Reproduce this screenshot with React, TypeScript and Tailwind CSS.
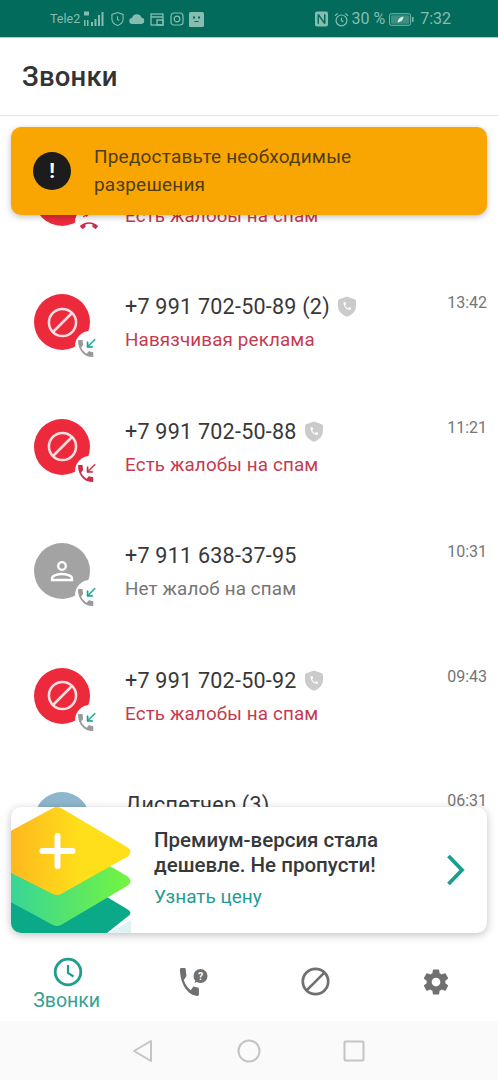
import React from 'react';

const font = "font-['Roboto','Noto_Sans',sans-serif]";

const HANDSET =
  'M6.62 10.79c1.44 2.83 3.76 5.14 6.59 6.59l2.2-2.2c.27-.27.67-.36 1.02-.24 1.12.37 2.33.57 3.57.57.55 0 1 .45 1 1V20c0 .55-.45 1-1 1-9.39 0-17-7.61-17-17 0-.55.45-1 1-1h3.5c.55 0 1 .45 1 1 0 1.25.2 2.45.57 3.57.11.35.03.74-.25 1.02l-2.2 2.2z';

const CALL_END =
  'M12 9c-1.600 0-3.150.25-4.600.72v3.100c0 .39-.23.74-.56.9-.98.49-1.870 1.120-2.660 1.850-.18.18-.43.28-.7.28-.28 0-.53-.11-.71-.29L.29 13.080c-.18-.17-.29-.42-.29-.7 0-.28.11-.53.29-.71C3.340 8.780 7.460 7 12 7s8.660 1.780 11.710 4.670c.18.18.29.43.29.71 0 .28-.11.53-.29.71l-2.480 2.480c-.18.18-.43.29-.71.29-.27 0-.52-.11-.7-.28-.79-.74-1.690-1.360-2.670-1.850-.33-.16-.56-.5-.56-.9v-3.100C15.150 9.250 13.600 9 12 9z';

type CallType = 'answered' | 'blocked' | 'missed';

interface CallRow {
  name: string;
  sub: string;
  time: string;
  kind: 'spam' | 'person' | 'dispatcher';
  shield?: boolean;
  danger?: boolean;
  call?: CallType;
}

const rows: CallRow[] = [
  { name: '+7 991 702-50-89 (2)', sub: 'Навязчивая реклама', time: '13:42', kind: 'spam', shield: true, danger: true, call: 'answered' },
  { name: '+7 991 702-50-88', sub: 'Есть жалобы на спам', time: '11:21', kind: 'spam', shield: true, danger: true, call: 'blocked' },
  { name: '+7 911 638-37-95', sub: 'Нет жалоб на спам', time: '10:31', kind: 'person', call: 'answered' },
  { name: '+7 991 702-50-92', sub: 'Есть жалобы на спам', time: '09:43', kind: 'spam', shield: true, danger: true, call: 'answered' },
];

function BanGlyph({ size, color, stroke }: { size: number; color: string; stroke: number }) {
  return (
    <svg width={size} height={size} viewBox="0 0 32 32" fill="none" stroke={color} strokeWidth={stroke}>
      <circle cx="16" cy="16" r="14" />
      <path d="M6.2 25.8 25.8 6.2" />
    </svg>
  );
}

function CallBadge({ call }: { call: CallType }) {
  const red = '#c9304a';
  return (
    <div className="absolute left-[41px] top-[37px] h-[30px] w-[30px] rounded-full bg-white">
      {call === 'missed' ? (
        <svg width="30" height="30" viewBox="0 0 30 30">
          <path d="M8.500 6l3 3 3-3M8.500 10l3-3" stroke={red} strokeWidth="1.300" fill="none" />
          <g transform="translate(5 10) scale(0.75)">
            <path d={CALL_END} fill={red} />
          </g>
        </svg>
      ) : (
        <svg width="30" height="30" viewBox="0 0 30 30">
          <g transform="translate(0.450 6.150) scale(0.85 0.95)">
            <path d={HANDSET} fill={call === 'blocked' ? red : '#9a9a9a'} />
          </g>
          <g transform="translate(9.200 5.800) scale(0.56)">
            <path
              d="M20 5.41L18.59 4 7 15.59V9H5v10h10v-2H8.41z"
              fill={call === 'blocked' ? red : '#18a394'}
              stroke={call === 'blocked' ? red : '#18a394'}
              strokeWidth="1"
            />
          </g>
        </svg>
      )}
    </div>
  );
}

function Avatar({ kind, call }: { kind: CallRow['kind']; call?: CallType }) {
  return (
    <div className="relative h-14 w-14 shrink-0">
      {kind === 'spam' && (
        <div className="flex h-14 w-14 items-center justify-center rounded-full bg-[#ec2a3c]">
          <BanGlyph size={31} color="#fbdfe2" stroke={2.6} />
        </div>
      )}
      {kind === 'person' && (
        <div className="flex h-14 w-14 items-center justify-center rounded-full bg-[#a3a3a3]">
          <svg width="24" height="24" viewBox="0 0 24 24" fill="none" stroke="#fff" strokeWidth="2.300">
            <circle cx="12" cy="7" r="3.800" />
            <path d="M2 21v-1.600c0-3 6-4.400 10-4.400s10 1.400 10 4.400V21z" />
          </svg>
        </div>
      )}
      {kind === 'dispatcher' && <div className="h-14 w-14 rounded-full bg-[#8fb6cc]" />}
      {call && <CallBadge call={call} />}
    </div>
  );
}

function Shield() {
  return (
    <svg width="18" height="21" viewBox="0 0 18 21" className="ml-[8px] mt-[-1px]">
      <path d="M9 0.500 16.800 3.300q1.200.5 1.200 1.700v5c0 5-3.600 8.800-9 10.800-5.400-2-9-5.800-9-10.800V5q0-1.200 1.200-1.700z" fill="#cbcbcb" />
      <g transform="translate(4.200 5) scale(0.42)">
        <path d={HANDSET} fill="#fff" />
      </g>
    </svg>
  );
}

function Row({ row }: { row: CallRow }) {
  return (
    <div className="flex h-[124.5px] items-center pl-[34px] pr-[11px]">
      <Avatar kind={row.kind} call={row.call} />
      <div className="ml-[35px] flex h-[60px] min-w-0 flex-1 flex-col justify-between self-center pt-[2px]">
        <div className="flex h-[26px] items-center">
          <span className="text-[21.5px] leading-[26px] tracking-[0.25px] text-[#383838]">{row.name}</span>
          {row.shield && <Shield />}
        </div>
        <span className={`text-[18.800px] leading-[24px] tracking-[0.15px] ${row.danger ? 'text-[#c63a50]' : 'text-[#757575]'}`}>
          {row.sub}
        </span>
      </div>
      <span className="mb-[38px] self-center text-[16px] leading-[20px] text-[#757575]">{row.time}</span>
    </div>
  );
}

function StatusBar() {
  const c = '#86bdb0';
  return (
    <div className="flex h-[38px] shrink-0 items-center border-b border-[#9fd8cb] bg-[#036b5b] pl-[50px] pr-[47px] pt-[1px] text-[#86bdb0]">
      <span className="text-[12.500px] leading-none">Tele2</span>
      <svg width="22" height="16" viewBox="0 0 22 16" fill={c} className="ml-[3px]">
        <rect x="1" y="0.500" width="5" height="4" />
        <rect x="1" y="9" width="1.500" height="6" />
        <rect x="4" y="9" width="1.500" height="6" />
        <rect x="8" y="11" width="2" height="4" />
        <rect x="11.500" y="8" width="2" height="7" />
        <rect x="15" y="4" width="2" height="11" />
        <rect x="18.500" y="1" width="2" height="14" />
      </svg>
      <svg width="13" height="16" viewBox="0 0 14 16" fill="none" stroke={c} strokeWidth="1.200" className="ml-[6px]">
        <path d="M7 1 13 3v5c0 3-2.500 5.800-6 7-3.500-1.200-6-4-6-7V3z" />
        <path d="M7 5v3.500l2 1" />
      </svg>
      <svg width="16" height="10" viewBox="0 0 16 10" fill={c} className="ml-[5px]">
        <path d="M3.500 10a3 3 0 0 1-.5-6 5 5 0 0 1 9.500-.5A3.300 3.300 0 0 1 12.500 10z" />
      </svg>
      <svg width="14" height="13" viewBox="0 0 14 13" fill="none" stroke={c} strokeWidth="1.300" className="ml-[5px]">
        <rect x="1" y="1" width="12" height="11" />
        <path d="M1 4h12M7 7h6v5H7z" />
      </svg>
      <svg width="14" height="14" viewBox="0 0 14 14" fill="none" stroke={c} strokeWidth="1.200" className="ml-[6px]">
        <rect x="1" y="1" width="12" height="12" rx="3" />
        <circle cx="7" cy="7" r="2.800" />
      </svg>
      <svg width="15" height="15" viewBox="0 0 15 15" className="ml-[5px]">
        <rect width="15" height="15" rx="1.500" fill={c} />
        <rect x="4" y="4.500" width="2" height="2" fill="#036b5b" />
        <rect x="9" y="4.500" width="2" height="2" fill="#036b5b" />
        <rect x="5.500" y="9" width="4" height="1" fill="#036b5b" />
      </svg>
      <div className="flex-1" />
      <svg width="13" height="16" viewBox="0 0 14 16" className="mr-[6px]">
        <rect width="14" height="16" rx="2" fill={c} />
        <path d="M3.500 3v10M10.500 3v10M3.500 3l7 10" stroke="#036b5b" strokeWidth="1.600" fill="none" />
      </svg>
      <svg width="15" height="15" viewBox="0 0 16 16" fill="none" stroke={c} strokeWidth="1.300" className="mr-[2px]">
        <circle cx="8" cy="9" r="5.800" />
        <path d="M8 6v3.200l2 1.300M1 4l3-2.500M15 4l-3-2.500" />
      </svg>
      <span className="text-[16px] leading-none">30 %</span>
      <svg width="25" height="13" viewBox="0 0 26 13" className="ml-[4px]">
        <rect x="0.500" y="0.500" width="22" height="12" rx="2" fill="none" stroke={c} />
        <rect x="2" y="2" width="19" height="9" rx="1" fill={c} fillOpacity="0.45" />
        <rect x="24" y="4" width="1.500" height="5" fill={c} />
        <path d="M9 9.500c0-3 2.500-5.500 6-6 0 3.500-2.500 6-6 6z" fill="#d5ebe5" />
      </svg>
      <span className="ml-[6px] text-[16px] leading-none">7:32</span>
    </div>
  );
}

function PermissionBanner() {
  return (
    <div className="absolute left-[11px] top-[11px] flex h-[88px] w-[476px] items-center rounded-[10px] bg-[#f9a602] pl-[22px] pr-4 shadow-[0_2px_6px_rgba(0,0,0,0.25)]">
      <div className="flex h-[38px] w-[38px] shrink-0 items-center justify-center rounded-full bg-[#1c1c1c]">
        <span className="text-[21px] font-bold leading-none text-white">!</span>
      </div>
      <p className="ml-[23px] w-[330px] text-[19px] leading-[28px] tracking-[0.2px] text-[#4f3d12]">
        Предоставьте необходимые разрешения
      </p>
    </div>
  );
}

function PremiumCard() {
  return (
    <div className="absolute bottom-[11px] left-[11px] flex h-[126px] w-[476px] items-center overflow-hidden rounded-[10px] bg-white shadow-[0_2px_8px_rgba(0,0,0,0.25)]">
      <svg width="122" height="126" viewBox="0 0 122 126" className="shrink-0">
        <defs>
          <linearGradient id="yellow" x1="0" x2="1" y1="0" y2="0">
            <stop offset="0" stopColor="#fdb61f" />
            <stop offset="0.6" stopColor="#ffdf1a" />
          </linearGradient>
          <linearGradient id="green" x1="0" x2="1" y1="0" y2="0">
            <stop offset="0" stopColor="#36d49a" />
            <stop offset="1" stopColor="#74f53f" />
          </linearGradient>
        </defs>
        <path d="M98 126 L120 113 L120 126z" fill="#dff3f5" />
        <path d="M-4 88 L46 60 L116 102 Q123 106 116 110 L96 126 L-4 126z" fill="#0aa988" />
        <path d="M-4 36 L46 28 L116 69 Q123 74 116 79 L50 118 Q46 120 42 118 L-4 93z" fill="url(#green)" />
        <path d="M-4 26 L42 1 Q46 -1 50 1 L116 40 Q123 45 116 50 L50 87 Q46 89 42 87 L-4 64z" fill="url(#yellow)" />
        <path d="M46.500 29v30M31.500 44h30" stroke="#fff" strokeWidth="6" strokeLinecap="round" />
      </svg>
      <div className="mb-[4px] ml-[21px] flex-1">
        <p className="text-[20.500px] font-medium leading-[25px] text-[#383838]">
          Премиум-версия стала
          <br />
          дешевле. Не пропусти!
        </p>
        <p className="mt-[7px] text-[19px] leading-[24px] text-[#1f9d8f]">Узнать цену</p>
      </div>
      <svg width="20" height="32" viewBox="0 0 20 32" fill="none" stroke="#1a9e8f" strokeWidth="3.800" className="mr-[21px]">
        <path d="M2.500 2 16 16 2.500 30" />
      </svg>
    </div>
  );
}

function BottomNav() {
  const gray = '#707070';
  return (
    <nav className="grid h-[77px] shrink-0 grid-cols-4 bg-white pl-[5px]">
      <div className="flex flex-col items-center pt-[13px]">
        <svg width="30" height="30" viewBox="0 0 30 30" fill="none" stroke="#1f9d8f" strokeWidth="2.800" className="ml-[3px]">
          <circle cx="15" cy="15" r="12.800" />
          <path d="M15 8v8l5.500 3.500" strokeWidth="2.200" />
        </svg>
        <span className="mt-[3px] text-[19.500px] leading-[22px] text-[#35a194]">Звонки</span>
      </div>
      <div className="flex items-center justify-center pb-[2px]">
        <svg width="30" height="30" viewBox="0 0 30 30" className="ml-[10px]">
          <g transform="translate(-3.150 -3.650) scale(1.050 1.550)">
            <path d={HANDSET} fill={gray} />
          </g>
          <circle cx="20.500" cy="9" r="7" fill={gray} />
          <path d="M15.500 13l-1 3 3.500-1.500z" fill={gray} />
          <text x="20.500" y="12.800" textAnchor="middle" fontSize="10.500" fontWeight="700" fill="#fff" fontFamily="Roboto">?</text>
        </svg>
      </div>
      <div className="flex items-center justify-center pb-[2px] pl-[4px]">
        <BanGlyph size={29} color={gray} stroke={3} />
      </div>
      <div className="flex items-center justify-center pb-[2px]">
        <svg width="30" height="30" viewBox="0 0 24 24" fill={gray}>
          <path d="M19.430 12.980c.04-.32.07-.64.07-.98s-.03-.66-.07-.98l2.110-1.650c.19-.15.240-.42.120-.64l-2-3.460c-.12-.22-.39-.3-.61-.22l-2.490 1c-.52-.4-1.080-.73-1.690-.98l-.38-2.650C14.460 2.180 14.250 2 14 2h-4c-.25 0-.46.18-.49.42l-.38 2.650c-.61.25-1.170.59-1.690.98l-2.490-1c-.23-.09-.49 0-.61.22l-2 3.460c-.13.22-.07.49.12.64l2.110 1.650c-.04.32-.07.65-.07.98s.03.66.07.98l-2.110 1.650c-.19.15-.24.42-.12.64l2 3.460c.12.22.39.3.61.22l2.490-1c.52.4 1.080.73 1.690.98l.38 2.650c.03.24.24.42.49.42h4c.25 0 .46-.18.49-.42l.38-2.650c.61-.25 1.170-.59 1.690-.98l2.490 1c.23.09.49 0 .61-.22l2-3.460c.12-.22.07-.49-.12-.64l-2.110-1.650zM12 15.500c-1.930 0-3.500-1.570-3.500-3.500s1.570-3.500 3.500-3.500 3.500 1.570 3.500 3.500-1.570 3.500-3.500 3.500z" />
        </svg>
      </div>
    </nav>
  );
}

function SystemNav() {
  return (
    <div className="flex h-[59px] shrink-0 items-center bg-[#fafafa] pl-[132px]">
      <svg width="21" height="24" viewBox="0 0 21 24" fill="none" stroke="#c4c4c4" strokeWidth="2" strokeLinejoin="round">
        <path d="M19 2v20L2 12z" />
      </svg>
      <svg width="24" height="24" viewBox="0 0 24 24" fill="none" stroke="#c4c4c4" strokeWidth="2" className="ml-[84px]">
        <circle cx="12" cy="12" r="10.500" />
      </svg>
      <svg width="22" height="22" viewBox="0 0 22 22" fill="none" stroke="#c4c4c4" strokeWidth="2" strokeLinejoin="round" className="ml-[82px]">
        <rect x="1.500" y="1.500" width="19" height="19" rx="1" />
      </svg>
    </div>
  );
}

export default function App() {
  return (
    <div className={`${font} flex h-[1080px] w-[498px] flex-col overflow-hidden bg-white`}>
      <StatusBar />
      <header className="z-10 flex h-[78px] shrink-0 items-center border-b border-[#e2e2e2] bg-white pl-[22px] pt-[1px]">
        <h1 className="text-[27.500px] font-medium leading-none tracking-[0.2px] text-[#333333]">Звонки</h1>
      </header>
      <main className="relative min-h-0 flex-1 overflow-hidden">
        <div className="pt-[19.500px]">
          <Row row={{ name: '', sub: 'Есть жалобы на спам', time: '', kind: 'spam', danger: true, call: 'missed' }} />
          {rows.map((row) => (
            <Row key={row.name} row={row} />
          ))}
          <Row row={{ name: 'Диспетчер (3)', sub: '', time: '06:31', kind: 'dispatcher' }} />
        </div>
        <PermissionBanner />
        <PremiumCard />
      </main>
      <BottomNav />
      <SystemNav />
    </div>
  );
}
